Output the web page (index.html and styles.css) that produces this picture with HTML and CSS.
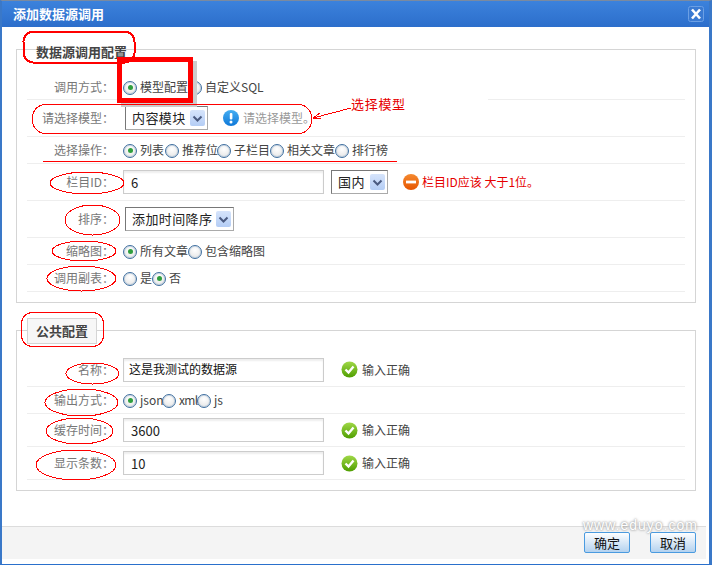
FILE: index.html
```html
<!DOCTYPE html>
<html lang="zh">
<head>
<meta charset="utf-8">
<title>添加数据源调用</title>
<link rel="stylesheet" href="styles.css">
</head>
<body>
<div class="window">
  <header class="titlebar">
    <span class="title">添加数据源调用</span>
    <button class="close" aria-label="关闭"><svg width="16" height="16" viewBox="0 0 16 16"><rect x=".5" y=".5" width="15" height="15" rx="2" fill="#3a7ad2" stroke="#6b9fe4"/><path d="M4 3.500l8 9M12 3.500l-8 9" stroke="#fff" stroke-width="2.600"/></svg></button>
  </header>
  <main class="content">
    <section class="panel panel-main">
      <h2 class="legend legend-plain">数据源调用配置</h2>
      <div class="row h24"><span class="label">调用方式：</span><div class="ctl">
        <span class="radio on"></span><span class="opt w51">模型配置</span><span class="radio"></span><span class="opt">自定义SQL</span>
      </div></div>
      <div class="row h36"><span class="label">请选择模型：</span><div class="ctl ctl-select">
        <span class="select w83"><span class="select-text">内容模块</span><span class="arrow"><svg width="15" height="15" viewBox="0 0 15 15"><path d="M3.500 5.500l4 4 4-4" fill="none" stroke="#4a5a80" stroke-width="2"/></svg></span></span>
        <span class="msg info"><svg class="ico" width="16" height="16" viewBox="0 0 16 16"><circle cx="8" cy="8" r="8" fill="url(#gInfo)"/><rect x="6.800" y="3" width="2.600" height="6.500" rx="1" fill="#fff"/><circle cx="8" cy="12" r="1.500" fill="#fff"/></svg>请选择模型。</span>
      </div></div>
      <div class="row h26"><span class="label">选择操作：</span><div class="ctl">
        <span class="radio on"></span><span class="opt w28">列表</span><span class="radio"></span><span class="opt w38">推荐位</span><span class="radio"></span><span class="opt w39">子栏目</span><span class="radio"></span><span class="opt w51">相关文章</span><span class="radio"></span><span class="opt">排行榜</span>
      </div></div>
      <div class="row h36"><span class="label">栏目ID：</span><div class="ctl">
        <span class="input">6</span>
        <span class="select w57 ml7"><span class="select-text">国内</span><span class="arrow"><svg width="15" height="15" viewBox="0 0 15 15"><path d="M3.500 5.500l4 4 4-4" fill="none" stroke="#4a5a80" stroke-width="2"/></svg></span></span>
        <span class="msg err"><svg class="ico" width="16" height="16" viewBox="0 0 16 16"><circle cx="8" cy="8" r="8" fill="url(#gErr)"/><rect x="3" y="6.600" width="10" height="2.800" fill="#fff"/></svg>栏目ID应该 大于1位。</span>
      </div></div>
      <div class="row h36"><span class="label">排序：</span><div class="ctl ctl-select">
        <span class="select w109"><span class="select-text">添加时间降序</span><span class="arrow"><svg width="15" height="15" viewBox="0 0 15 15"><path d="M3.500 5.500l4 4 4-4" fill="none" stroke="#4a5a80" stroke-width="2"/></svg></span></span>
      </div></div>
      <div class="row h26"><span class="label">缩略图：</span><div class="ctl">
        <span class="radio on"></span><span class="opt w51">所有文章</span><span class="radio"></span><span class="opt">包含缩略图</span>
      </div></div>
      <div class="row h26"><span class="label">调用副表：</span><div class="ctl">
        <span class="radio"></span><span class="opt w15">是</span><span class="radio on"></span><span class="opt">否</span>
      </div></div>
    </section>

    <section class="panel panel-common">
      <h2 class="legend legend-box">公共配置</h2>
      <div class="row h32 first"><span class="label">名称：</span><div class="ctl">
        <span class="input input-cjk">这是我测试的数据源</span><span class="msg ok"><svg class="ico" width="17" height="17" viewBox="0 0 17 17"><circle cx="8.500" cy="8.500" r="8" fill="url(#gOk)"/><path d="M4.500 8.500l3 3 5-6" fill="none" stroke="#fff" stroke-width="2.400"/></svg>输入正确</span>
      </div></div>
      <div class="row h26"><span class="label">输出方式：</span><div class="ctl">
        <span class="radio on"></span><span class="opt w25">json</span><span class="radio"></span><span class="opt w21 tight">xml</span><span class="radio"></span><span class="opt">js</span>
      </div></div>
      <div class="row h32"><span class="label">缓存时间：</span><div class="ctl">
        <span class="input">3600</span><span class="msg ok"><svg class="ico" width="17" height="17" viewBox="0 0 17 17"><circle cx="8.500" cy="8.500" r="8" fill="url(#gOk)"/><path d="M4.500 8.500l3 3 5-6" fill="none" stroke="#fff" stroke-width="2.400"/></svg>输入正确</span>
      </div></div>
      <div class="row h32"><span class="label">显示条数：</span><div class="ctl">
        <span class="input">10</span><span class="msg ok"><svg class="ico" width="17" height="17" viewBox="0 0 17 17"><circle cx="8.500" cy="8.500" r="8" fill="url(#gOk)"/><path d="M4.500 8.500l3 3 5-6" fill="none" stroke="#fff" stroke-width="2.400"/></svg>输入正确</span>
      </div></div>
    </section>
  </main>
  <footer class="footer">
    <button class="btn">确定</button>
    <button class="btn">取消</button>
  </footer>

  <div class="patch"></div>
  <div class="focus-box"></div>
  <svg class="marks" width="712" height="565" viewBox="0 0 712 565" fill="none" stroke="#f00" shape-rendering="crispEdges">
    <defs>
      <linearGradient id="gOk" x1="0" y1="0" x2="0" y2="1"><stop offset="0" stop-color="#a0d848"/><stop offset="1" stop-color="#4f9e00"/></linearGradient>
      <linearGradient id="gInfo" x1="0" y1="0" x2="0" y2="1"><stop offset="0" stop-color="#45aef2"/><stop offset="1" stop-color="#0f78d8"/></linearGradient>
      <linearGradient id="gErr" x1="0" y1="0" x2="0" y2="1"><stop offset="0" stop-color="#f58a30"/><stop offset="1" stop-color="#e65500"/></linearGradient>
    </defs>
    <rect x="23.500" y="31.500" width="111" height="31" rx="10" stroke-width="2"/>
    <rect x="32.500" y="104.500" width="279" height="29" rx="13"/>
    <path d="M351 108L313 118M313 118l7-5M313 118l8 1"/>
    <path d="M43 161.500H397"/>
    <ellipse cx="87" cy="183" rx="37" ry="11"/>
    <ellipse cx="92.500" cy="220" rx="27.500" ry="15"/>
    <ellipse cx="84" cy="251" rx="32" ry="10"/>
    <ellipse cx="81.500" cy="278.500" rx="34.500" ry="12.500"/>
    <rect x="21.500" y="312.500" width="82" height="34" rx="11"/>
    <ellipse cx="92.500" cy="373.500" rx="26.500" ry="10.500"/>
    <ellipse cx="81.500" cy="402.500" rx="36.500" ry="13.500"/>
    <ellipse cx="79.500" cy="431" rx="33.500" ry="13"/>
    <ellipse cx="76" cy="465" rx="40" ry="15"/>
  </svg>
  <span class="note">选择模型</span>
  <span class="watermark">www.eduyo.com</span>
</div>
</body>
</html>
```

FILE: styles.css
```css
* { box-sizing: border-box; }
html, body { margin: 0; padding: 0; }
body { width: 712px; height: 565px; overflow: hidden; background: #fff; font: 12px/16px "Noto Sans CJK SC", "Liberation Sans", sans-serif; color: #444; }

.window { position: relative; width: 712px; height: 565px; display: flex; flex-direction: column; background: #fff; border-top: 1px solid #7a8aa0; border-left: 2px solid #3a78c8; border-right: 3px solid #3a78c8; border-bottom: 1px solid #2a70cc; }
.titlebar { height: 26px; flex: none; display: flex; align-items: center; justify-content: space-between; padding: 0 5px 0 11px; background: linear-gradient(#3c82dc, #2c6ecb); }
.title { color: #fff; font-weight: 700; font-size: 13px; }
.close { padding: 0; margin: 0; border: 0; background: none; width: 16px; height: 16px; display: block; }
.close svg { display: block; }

.content { flex: 1; padding: 22px 13px 0 14px; }
.panel { position: relative; border: 1px solid #d5d5d5; padding: 0 10px; }
.panel-main { height: 254px; padding-top: 25px; }
.panel-common { height: 161px; margin-top: 27px; padding-top: 24px; }
.legend { position: absolute; margin: 0; font-size: 13px; font-weight: 700; color: #444; line-height: 16px; left: 10px; }
.legend-plain { top: -6px; padding-left: 9px; height: 22px; }
.legend-box { top: -13px; width: 70px; height: 26px; background: #f7f7f7; border: 1px solid #d5d5d5; padding: 4px 0 0 8px; }

.row { display: flex; align-items: center; border-bottom: 1px solid #eee; }
.h24 { height: 25px; }
.h26 { height: 27px; }
.h32 { height: 33px; }
.h36 { height: 37px; }
.first { height: 32px; padding-bottom: 2px; }
.label { width: 87px; flex: none; text-align: right; color: #777; }
.ctl { display: flex; align-items: center; margin-left: 9px; }
.ctl-select { margin-left: 11px; }

.radio { width: 14px; height: 14px; flex: none; border-radius: 50%; border: 1px solid #3f6f9f; background: radial-gradient(circle at 50% 35%, #fff, #e0e0e0); box-shadow: inset 0 0 0 1px rgba(150,180,210,.4); position: relative; margin-top: 1px; }
.radio.on::after { content: ""; position: absolute; left: 3.500px; top: 3.500px; width: 5px; height: 5px; border-radius: 50%; background: #2f9e3e; }
.opt { display: block; padding-left: 3px; color: #444; white-space: nowrap; }
.tight { letter-spacing: -.7px; }
.w15 { width: 15px; }
.w21 { width: 21px; }
.w25 { width: 25px; }
.w28 { width: 28px; }
.w38 { width: 38px; }
.w39 { width: 39px; }
.w51 { width: 51px; }

.input { width: 201px; height: 24px; flex: none; border: 1px solid #ccc; box-shadow: inset 0 2px 2px #eee; padding: 3px 7px; background: #fff; color: #222; font-size: 13px; line-height: 17px; }
.input-cjk { font-size: 12px; padding: 2px 5px; line-height: 16px; color: #111; }
.select { height: 24px; display: flex; align-items: center; justify-content: space-between; flex: none; border: 1px solid #aaa; border-top-color: #777; border-left-color: #777; padding: 0 2px 0 6px; background: #fff; color: #222; font-size: 13px; }
.w83 { width: 83px; }
.w57 { width: 57px; }
.w109 { width: 109px; }
.ml7 { margin-left: 7px; }
.select-text { white-space: nowrap; letter-spacing: .4px; }
.arrow { width: 15px; height: 16px; flex: none; border-radius: 2px; background: linear-gradient(#d6e4fb, #b4cdf5); display: flex; align-items: center; }
.arrow svg { display: block; }

.msg { display: flex; align-items: center; white-space: nowrap; }
.ico { flex: none; display: block; margin-right: 3px; }
.info { margin-left: 15px; color: #999; }
.info .ico { margin-right: 4px; }
.err { margin-left: 15px; color: #e60000; }
.ok { margin-left: 17px; color: #444; }
.ok .ico { margin-right: 4px; }

.footer { flex: none; height: 33px; margin: 0 3px 5px 0; background: #f4f4f4; border-top: 1px solid #dcdcdc; display: flex; justify-content: flex-end; gap: 20px; padding: 5px 10px 0 0; }
.btn { width: 46px; height: 21px; padding: 0; border: 1px solid #4a9be0; border-radius: 2px; background: linear-gradient(#fdfeff, #b4d2ef); font: 13px/17px "Noto Sans CJK SC", sans-serif; color: #111; }

/* annotations drawn over the form, in window coordinates */
.marks { position: absolute; left: -2px; top: -1px; pointer-events: none; }
.patch { position: absolute; left: 116px; top: 96px; width: 370px; height: 5px; background: #fff; }
.focus-box { position: absolute; left: 115px; top: 56px; width: 76px; height: 46px; border: 5px solid #f00; box-shadow: 4px 4px 0 #ccc; }
.note { position: absolute; left: 349px; top: 95px; color: #e60000; font-size: 13px; letter-spacing: .7px; }
.watermark { position: absolute; left: 581px; top: 520px; color: #fff; font: 14px/9px "Liberation Sans", sans-serif; letter-spacing: 1px; text-shadow: 0 0 2px #999, 0 0 3px #aaa; }
```
